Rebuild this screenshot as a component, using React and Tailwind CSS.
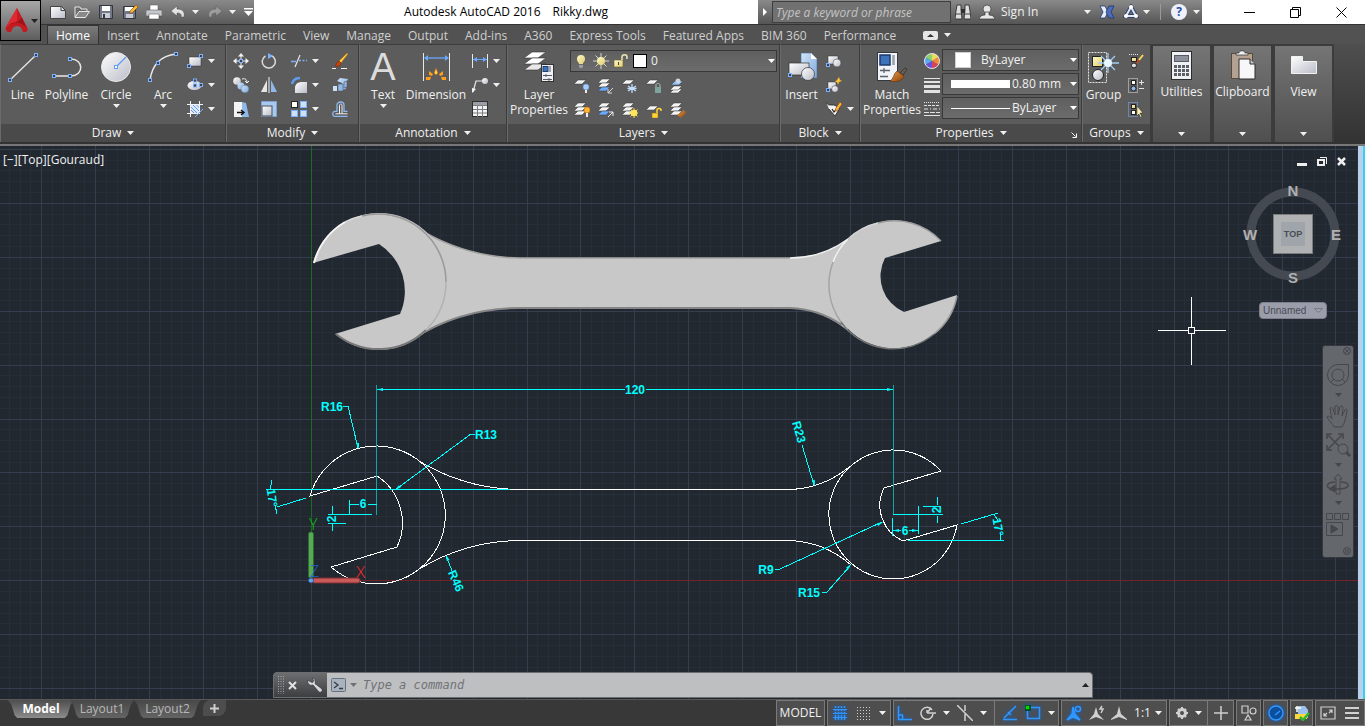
import React, { useState } from "react";

const tabs = [
  "Home",
  "Insert",
  "Annotate",
  "Parametric",
  "View",
  "Manage",
  "Output",
  "Add-ins",
  "A360",
  "Express Tools",
  "Featured Apps",
  "BIM 360",
  "Performance",
];

// ---------- small helpers ----------

const Ico = ({ size = 16, children }) => (
  <svg width={size} height={size} viewBox={`0 0 ${size} ${size}`} fill="none" className="shrink-0">
    {children}
  </svg>
);

const Tri = ({ className = "" }) => (
  <svg width="7" height="4" viewBox="0 0 7 4" className={`shrink-0 ${className}`}>
    <path d="M0 0h7L3.500 4z" fill="currentColor" />
  </svg>
);

const Grip = ({ x, y }) => (
  <rect x={x - 1.5} y={y - 1.5} width="3" height="3" fill="#3b3f48" stroke="#7db0ff" />
);

const Sheet = ({ x = 0, y = 0, fill = "#f4f4f4" }) => (
  <path d={`M${x + 4} ${y}h8l-4 4h-8z`} fill={fill} stroke="#3a3a3a" strokeWidth=".5" />
);

const Defs = () => (
  <svg width="0" height="0" className="absolute">
    <defs>
      <linearGradient id="metal" x1="0" y1="0" x2="1" y2="1">
        <stop offset="0" stopColor="#ffffff" />
        <stop offset="1" stopColor="#b9bcc8" />
      </linearGradient>
      <linearGradient id="blue" x1="0" y1="0" x2="1" y2="1">
        <stop offset="0" stopColor="#d3e6fb" />
        <stop offset="1" stopColor="#7ea9dc" />
      </linearGradient>
      <linearGradient id="gold" x1="0" y1="0" x2="1" y2="1">
        <stop offset="0" stopColor="#fffbc9" />
        <stop offset="1" stopColor="#e0cc6d" />
      </linearGradient>
      <linearGradient id="brown" x1="0" y1="0" x2="1" y2="1">
        <stop offset="0" stopColor="#e89a4c" />
        <stop offset="1" stopColor="#8a4207" />
      </linearGradient>
    </defs>
  </svg>
);

// ---------- ribbon buttons ----------

const BigButton = ({ icon, label, label2, arrow, width }) => (
  <button className={`flex flex-col items-center pt-1.5 text-[12px] leading-[15px] text-[#f0f0f0] ${width}`}>
    {icon}
    <span className="mt-1 whitespace-nowrap">{label}</span>
    {label2 && <span className="whitespace-nowrap">{label2}</span>}
    {arrow && <Tri className="mt-0.5" />}
  </button>
);

const SmallButton = ({ icon, arrow, name }) => (
  <button aria-label={name} className="flex h-6 items-center gap-[5px] text-[#f0f0f0]">
    {icon}
    {arrow && <Tri />}
  </button>
);

const Panel = ({ title, width, children, launcher }) => (
  <section className={`flex shrink-0 flex-col border-x border-t border-[#3c3c3c] border-l-[#6a6a6a] bg-[#5c5c5c] ${width}`}>
    <div className="flex flex-1">{children}</div>
    <button className="relative flex h-[18px] items-center justify-center gap-1.5 bg-[#4a4a4a] text-[12px] text-[#f0f0f0]">
      {title}
      <Tri />
      {launcher && (
        <svg width="6" height="6" viewBox="0 0 6 6" className="absolute right-1 bottom-1" fill="none" stroke="#fff">
          <path d="M.5.5l4 4M5.500 1.500v4h-4" />
        </svg>
      )}
    </button>
  </section>
);

const CollapsedPanel = ({ title, icon }) => (
  <button className="flex w-[61px] shrink-0 flex-col items-center border-2 border-b-0 border-[#3c3c3c] bg-gradient-to-b from-[#757575] to-[#4f4f4f] pt-1 text-[12px] leading-[15px] text-[#f0f0f0]">
    {icon}
    <span className="mt-0.5 whitespace-nowrap">{title}</span>
    <Tri className="mt-auto mb-1.5" />
  </button>
);

const PropertySelect = ({ name, options, swatch }) => (
  <label className="flex h-[22px] items-center border border-[#383838] bg-gradient-to-b from-[#5f5f5f] to-[#6c6c6c] pl-2">
    {swatch}
    <select aria-label={name} className="w-full min-w-0 flex-1 appearance-none bg-transparent text-[12px] leading-[18px] text-[#f0f0f0] outline-none">
      {options.map((o) => (
        <option key={o}>{o}</option>
      ))}
    </select>
    <Tri className="mr-px text-white" />
  </label>
);

// ---------- icons: draw ----------

const LineIcon = () => (
  <Ico size={32}>
    <path d="M3 29L29 4" stroke="#e8e8e8" strokeWidth="1.300" />
    <Grip x={3} y={29} />
    <Grip x={29} y={4} />
  </Ico>
);

const PolylineIcon = () => (
  <Ico size={32}>
    <path d="M3 25h17c14-1 12-17 0-17" stroke="#e8e8e8" strokeWidth="1.500" />
    <Grip x={3} y={25} />
    <Grip x={19} y={25} />
    <Grip x={19} y={8} />
  </Ico>
);

const CircleIcon = () => (
  <Ico size={32}>
    <circle cx="16" cy="16" r="14.500" fill="url(#metal)" stroke="#e9e9e9" />
    <path d="M16 16L26 6" stroke="#5f9cf0" strokeWidth="1.300" />
    <rect x="14.500" y="14.500" width="3" height="3" fill="#fff" stroke="#5f9cf0" />
  </Ico>
);

const ArcIcon = () => (
  <Ico size={32}>
    <path d="M3 29C5 15 12 5 29 3" stroke="#e8e8e8" strokeWidth="1.500" />
    <Grip x={3} y={29} />
    <Grip x={11} y={12} />
    <Grip x={29} y={3} />
  </Ico>
);

const RectIcon = () => (
  <Ico>
    <rect x="2" y="4" width="12" height="9" fill="url(#metal)" stroke="#333" strokeWidth=".5" />
    <Grip x={14} y={3} />
    <Grip x={2} y={13} />
  </Ico>
);

const EllipseIcon = () => (
  <Ico>
    <ellipse cx="7.500" cy="8.500" rx="7" ry="4.500" fill="url(#metal)" />
    <Grip x={8} y={8.5} />
    <Grip x={14} y={8} />
    <Grip x={8} y={3.5} />
  </Ico>
);

const HatchIcon = () => (
  <Ico>
    <rect x="3" y="3" width="10" height="10" fill="#dfe9fa" />
    <path d="M4 6l6 6M4 9l4 4M6 4l7 7M9 3.500l4 4" stroke="#5f9cf0" />
    <path d="M3.500 0v16M12.500 0v12M0 3.500h16M0 12.500h12" stroke="#f2f2f2" />
    <path d="M8 16l8-8" stroke="#7db0ff" />
  </Ico>
);

// ---------- icons: modify ----------

const MoveIcon = () => (
  <Ico>
    <path d="M8 0l3 3.500H5zM8 16l-3-3.500h6zM0 8l3.500-3v6zM16 8l-3.500 3V5zM7.500 2h1v4h-1zM7.500 10h1v4h-1zM2 7.500h4v1H2zM10 7.500h4v1h-4z" fill="#f2f2f2" />
    <Grip x={8} y={8} />
  </Ico>
);

const RotateIcon = () => (
  <Ico>
    <path d="M10 2.500A6.500 6.500 0 1 1 4.500 3" stroke="#dcdcdc" strokeWidth="1.500" />
    <path d="M7 0l5 3-5 3z" fill="#7db0ff" />
  </Ico>
);

const TrimIcon = () => (
  <Ico>
    <path d="M0 8.500h5" stroke="#7db0ff" strokeWidth="1.500" />
    <path d="M4 14L9 2" stroke="#e8e8e8" strokeWidth="1.200" />
    <path d="M8 7.500h8" stroke="#7db0ff" strokeWidth="1.500" strokeDasharray="2 1.500" />
  </Ico>
);

const EraseIcon = () => (
  <Ico>
    <path d="M15 0l1 1-7 9-2-2z" fill="#ffc94a" stroke="#a05a00" strokeWidth=".5" />
    <path d="M7 8l2 2c0 3-3 4-6 3 2-1 1-4 4-5z" fill="#c8440c" stroke="#6e1e00" strokeWidth=".5" />
    <path d="M0 15.500h4M9 15.500h6" stroke="#f2f2f2" />
  </Ico>
);

const CopyIcon = () => (
  <Ico>
    <circle cx="4" cy="4" r="3.800" fill="url(#metal)" />
    <circle cx="8" cy="9" r="3.500" fill="url(#blue)" />
    <circle cx="12" cy="12" r="3.800" fill="url(#blue)" stroke="#4f6a94" strokeWidth=".4" />
    <path d="M9 2c4-1 5 1 5 4M12 4l2 2 2-2" stroke="#f2f2f2" />
  </Ico>
);

const MirrorIcon = () => (
  <Ico>
    <path d="M0 15L6 3v12z" fill="#e6e6e6" />
    <path d="M10 15V3l6 12z" fill="#8fb9ea" />
    <path d="M8 0v16" stroke="#f2f2f2" />
  </Ico>
);

const FilletIcon = () => (
  <Ico>
    <path d="M4 16V11c0-4 3-6 7-6h5v11z" fill="url(#metal)" />
    <path d="M1 7C2 3 5 1 9 1" stroke="#5f9cf0" strokeWidth="2.500" />
  </Ico>
);

const ExplodeIcon = () => (
  <Ico>
    <path d="M5 4l3-3 8 1-2 4v6l-4 1V6z" fill="url(#blue)" />
    <path d="M1 9h4v5H1z" fill="#cfe1f7" />
    <path d="M6 7h5v7H6zM12 5l3-1v6l-3 1z" fill="#8fb9ea" stroke="#55585c" strokeWidth=".6" />
  </Ico>
);

const StretchIcon = () => (
  <Ico>
    <path d="M1 1h8v15H1z" fill="#f4f4f4" />
    <path d="M9 1l4 1 3 14H9z" fill="#8fb9ea" />
    <path d="M4 11.500h6M8 9l3 2.500L8 14" stroke="#111" strokeWidth="1.500" />
  </Ico>
);

const ScaleIcon = () => (
  <Ico>
    <path d="M.5.5h15v15H.5z" fill="#a9c8ef" stroke="#7ea2d2" />
    <rect x="1" y="5" width="10" height="10" fill="url(#metal)" stroke="#4d5057" />
  </Ico>
);

const ArrayIcon = () => (
  <Ico>
    <rect x=".5" y=".5" width="6" height="6" fill="#fff" stroke="#222" />
    <rect x="9.500" y=".5" width="6" height="6" fill="#cfe1f7" stroke="#7db0ff" />
    <rect x=".5" y="9.500" width="6" height="6" fill="#cfe1f7" stroke="#7db0ff" />
    <rect x="9.500" y="9.500" width="6" height="6" fill="#cfe1f7" stroke="#7db0ff" />
  </Ico>
);

const OffsetIcon = () => (
  <Ico>
    <path d="M15.500 15.300H3c-3 0-3-5 0-5h2V4c0-4 7-4 7 0v6.300h3.500" stroke="#8db8f2" strokeWidth="1.300" />
    <path d="M15.500 12.800H7.500V4.500c0-2 2.500-2 2.500 0v8M7.500 12.800H3.500" stroke="#f2f2f2" />
  </Ico>
);

// ---------- icons: annotation ----------

const DimensionIcon = () => (
  <Ico size={32}>
    <path d="M3.500 2v28M29.500 2v28" stroke="#e8e8e8" />
    <path d="M5 7h23" stroke="#6aa7ff" strokeWidth="1.300" />
    <path d="M4 7l4-3v6zM29 7l-4-3v6z" fill="#6aa7ff" />
    <path d="M16 17l2 5-2 2-2-2zM9 20l4 3-1 2-3-1zM23 20l-4 3 1 2 3-1zM6 26l5 0-1 3-4 0zM26 26l-5 0 1 3 4 0z" fill="#ff9c1a" />
    <path d="M16 19l1 3-1 1-1-1z" fill="#ffe36b" />
  </Ico>
);

const LinearIcon = () => (
  <Ico>
    <path d="M.5 1v14M15.500 1v14" stroke="#e8e8e8" />
    <path d="M1 6.500h14" stroke="#6aa7ff" />
    <path d="M1 6.500L5 4v5zM15 6.500L11 4v5z" fill="#6aa7ff" />
  </Ico>
);

const LeaderIcon = () => (
  <Ico>
    <path d="M1 15L4 4h6" stroke="#e8e8e8" strokeWidth="1.200" />
    <path d="M0 16l0-5 4 1z" fill="#f2f2f2" />
    <circle cx="13" cy="4" r="3" fill="url(#metal)" />
  </Ico>
);

const TableIcon = () => (
  <Ico>
    <rect x=".5" y=".5" width="15" height="15" fill="#f2f2f2" stroke="#2f2f2f" />
    <path d="M1 1h14v3H1z" fill="#9b9ea6" />
    <path d="M1 4.500h14M1 8.500h14M1 12h14M5.500 4v12M10.500 4v12" stroke="#7a7d84" />
  </Ico>
);

// ---------- icons: layers ----------

const LayerPropsIcon = () => (
  <Ico size={32}>
    <path d="M9 1h14l-8 6H1z" fill="#fff" stroke="#333" strokeWidth=".6" />
    <path d="M9 7h14l-8 6H1z" fill="#fff" stroke="#333" strokeWidth=".6" />
    <path d="M9 13h14l-8 6H1z" fill="#e8e8e8" stroke="#333" strokeWidth=".6" />
    <rect x="18.500" y="13.500" width="12" height="17" fill="#eef0f6" stroke="#333" />
    <rect x="20" y="15.500" width="5" height="5" fill="#3e73bb" stroke="#1e3f72" />
    <path d="M27 15v6M20 24.500h9M20 28.500h9M23 23v3M26 27v3" stroke="#555b66" />
  </Ico>
);

const Stack = ({ accent = "#f4f4f4" }) => (
  <>
    <Sheet y={1} />
    <Sheet y={5} />
    <Sheet y={9} fill={accent} />
  </>
);

const layerTools = [
  { name: "Layer Off", icon: <Ico><Sheet y={2} /><circle cx="12" cy="9" r="3" fill="#a8cdfa" stroke="#5f8dd0" strokeWidth=".5" /><path d="M12 12v3" stroke="#eee" strokeWidth="2" /></Ico> },
  { name: "Layer Isolate", icon: <Ico><Stack accent="#6aa7ff" /><path d="M15 10l-5 5M10 11v4h4" stroke="#d8d8d8" /></Ico> },
  { name: "Layer Freeze", icon: <Ico><Sheet y={2} /><path d="M10 6v9M6 8l8 5M14 8l-8 5M5.500 10.500h9" stroke="#c3ddfc" strokeWidth="1.300" /></Ico> },
  { name: "Layer Lock", icon: <Ico><Sheet y={2} /><rect x="9" y="9" width="6" height="6" fill="#7fa39d" /><path d="M10 9V7c0-2 4-2 4 0v2" stroke="#a9bdb9" /></Ico> },
  { name: "Make Current", icon: <Ico><Sheet y={11} /><Sheet y={8} /><Sheet x={1} y={3} fill="#8fc0f5" /><circle cx="8" cy="3" r="2.500" fill="#cbd6e2" /></Ico> },
  { name: "Turn All On", icon: <Ico><Stack /><circle cx="13" cy="8" r="3" fill="#ffb938" stroke="#e06d00" strokeWidth=".7" /><path d="M13 11v4" stroke="#eee" strokeWidth="2" /></Ico> },
  { name: "Unisolate", icon: <Ico><Stack accent="#6aa7ff" /><path d="M10 15l5-5M11 10h4v4" stroke="#f2f2f2" /></Ico> },
  { name: "Thaw All", icon: <Ico><Stack /><path d="M12 6v10M7 11h10M8.500 7.500l7 7M15.500 7.500l-7 7" stroke="#ffd93b" /><circle cx="12" cy="11" r="3.300" fill="#ffe65c" /></Ico> },
  { name: "Layer Unlock", icon: <Ico><Sheet y={4} /><rect x="6" y="11" width="6" height="5" fill="#ffd23a" stroke="#8b6500" strokeWidth=".5" /><path d="M11 11V8c0-2 4-2 4 0v1" stroke="#ffd23a" strokeWidth="1.500" /></Ico> },
  { name: "Match Layer", icon: <Ico><Stack /><path d="M14 8l2 3-5 5-4-3z" fill="url(#brown)" /></Ico> },
];

// ---------- icons: block, properties, groups ----------

const InsertIcon = () => (
  <Ico size={32}>
    <path d="M15 2h10l6 6v19H15z" fill="url(#blue)" stroke="#4b6d98" strokeWidth=".6" />
    <path d="M25 2v6h6z" fill="#fff" />
    <rect x="3" y="12" width="20" height="12" fill="url(#metal)" stroke="#333" strokeWidth=".7" />
    <circle cx="22" cy="23" r="6.500" fill="url(#metal)" stroke="#333" strokeWidth=".7" />
    <Grip x={4} y={24} />
  </Ico>
);

const BlockShape = () => (
  <>
    <rect x="2" y="3" width="10" height="8" fill="url(#metal)" stroke="#333" strokeWidth=".5" />
    <circle cx="11" cy="10" r="4" fill="url(#metal)" stroke="#333" strokeWidth=".5" />
    <Grip x={2} y={12} />
  </>
);

const EditBlockIcon = () => (
  <Ico>
    <rect x="2" y="5" width="8" height="7" fill="url(#metal)" stroke="#333" strokeWidth=".5" />
    <circle cx="9" cy="12" r="3.300" fill="url(#metal)" stroke="#333" strokeWidth=".5" />
    <Grip x={2} y={13} />
    <path d="M13 0l1 3 2 1-3 1-1 3-1-3-2 0 2-2z" fill="#ffc12e" />
  </Ico>
);

const AttributeIcon = () => (
  <Ico>
    <path d="M0 1c1 2 2 3 4 3h4l6 3-5 8-6-7" fill="#f2f2f2" stroke="#222" strokeWidth=".8" />
    <path d="M6 8l2 3 4-5" stroke="#222" strokeWidth="1.200" />
    <path d="M14 1l2 2-5 7-2 0 1-3z" fill="#ffb938" stroke="#9b4200" strokeWidth=".6" />
  </Ico>
);

const MatchIcon = () => (
  <Ico size={32}>
    <rect x="1.500" y="1.500" width="20" height="28" fill="#f1f3f8" stroke="#33383f" />
    <rect x="4" y="4" width="10" height="10" fill="#3e73bb" stroke="#1c3b6b" strokeWidth="1.500" />
    <path d="M17.500 4v10" stroke="#9aa0aa" strokeWidth="2.500" />
    <path d="M4 19.500h10M8 17v5M4 25.500h8" stroke="#5b616b" strokeWidth="1.300" />
    <path d="M24 22l5-5 2 1-4 6z" fill="#6b5b50" stroke="#222" strokeWidth=".6" />
    <path d="M21 20l7 5c-1 4-7 7-14 5 4-2 3-7 7-10z" fill="url(#brown)" stroke="#5f2f08" strokeWidth=".6" />
  </Ico>
);

const ColorWheel = () => (
  <Ico>
    <path d="M8 8V.5A7.500 7.500 0 0 1 14.500 4.200z" fill="#ecd95e" />
    <path d="M8 8l6.500-3.800a7.500 7.500 0 0 1 0 7.500z" fill="#f08a3c" />
    <path d="M8 8l6.500 3.800A7.500 7.500 0 0 1 8 15.500z" fill="#d4455c" />
    <path d="M8 8v7.500a7.500 7.500 0 0 1-6.500-3.700z" fill="#6a4fd8" />
    <path d="M8 8l-6.500 3.800a7.500 7.500 0 0 1 0-7.600z" fill="#59a8f0" />
    <path d="M8 8L1.500 4.200A7.500 7.500 0 0 1 8 .5z" fill="#8cd06a" />
    <circle cx="8" cy="8" r="7.500" stroke="#e2e2e2" />
  </Ico>
);

const WeightIcon = () => (
  <Ico>
    <path d="M0 1.500h16" stroke="#e2e2e2" />
    <path d="M0 5h16" stroke="#e2e2e2" strokeWidth="2" />
    <path d="M0 9.500h16" stroke="#e2e2e2" strokeWidth="3" />
    <path d="M0 14.500h16" stroke="#e2e2e2" strokeWidth="3" />
  </Ico>
);

const LinetypeIcon = () => (
  <Ico>
    <path d="M0 1.500h16" stroke="#e2e2e2" strokeDasharray="1 1" />
    <path d="M0 4.500h16" stroke="#e2e2e2" strokeDasharray="3 1" />
    <path d="M0 8h16" stroke="#e2e2e2" strokeDasharray="4 2 1 2" />
    <path d="M0 11.500h16" stroke="#e2e2e2" strokeDasharray="5 1" />
    <path d="M0 14.500h16" stroke="#e2e2e2" />
  </Ico>
);

const GroupIcon = () => (
  <Ico size={32}>
    <rect x=".5" y="1.500" width="18" height="30" stroke="#e2e2e2" strokeDasharray="2 1" />
    <rect x="4.500" y="5.500" width="10" height="10" fill="url(#gold)" stroke="#222" />
    <circle cx="10" cy="24" r="5.500" fill="url(#metal)" stroke="#222" />
    <path d="M20 2v20M10 12h21M13 5l14 14M27 5L13 19" stroke="#9fd0f8" strokeWidth="1.300" />
    <circle cx="20" cy="12" r="4" fill="#e7f6ff" />
  </Ico>
);

const GroupEditIcon = () => (
  <Ico>
    <path d="M1 1.500h9" stroke="#e2e2e2" strokeDasharray="1 1" />
    <rect x="3.500" y="4.500" width="5" height="4" fill="url(#gold)" stroke="#222" />
    <circle cx="6" cy="12.500" r="2.500" fill="url(#metal)" stroke="#222" />
    <path d="M15 2l-4 5" stroke="#ffd35a" strokeWidth="2" />
    <path d="M11 7l-2 3" stroke="#d0421c" strokeWidth="2" />
  </Ico>
);

const GroupAddIcon = () => (
  <Ico>
    <rect x=".5" y="1.500" width="9" height="14" stroke="#e2e2e2" strokeDasharray="1 1" />
    <rect x="3.500" y="3.500" width="4" height="4" fill="#fff" stroke="#222" />
    <circle cx="5.500" cy="11.500" r="2.500" fill="#8fb9ea" stroke="#222" />
    <path d="M11 5.500h5M13.500 3v5M11 11.500h5" stroke="#e2e2e2" />
  </Ico>
);

const GroupSelectIcon = () => (
  <Ico>
    <rect x=".5" y="1.500" width="9" height="14" stroke="#7db0ff" strokeDasharray="1 1" />
    <rect x="3.500" y="3.500" width="4" height="4" fill="url(#gold)" stroke="#222" />
    <rect x="3.500" y="9.500" width="4" height="4" fill="#fff" stroke="#222" />
    <path d="M9 5l6 7h-3l2 4-2 0-1-3-2 2z" fill="#fff3b0" stroke="#222" strokeWidth=".5" />
  </Ico>
);

const UtilitiesIcon = () => (
  <Ico size={32}>
    <rect x="5.500" y="1.500" width="20" height="28" fill="#f0f1f4" stroke="#2c2c2c" />
    <rect x="8.500" y="5.500" width="14" height="6" fill="#8b909a" stroke="#555a64" />
    {[15, 19, 23].map((y) => (
      <path key={y} d={`M8 ${y + 1.5}h15`} stroke="#5b5f68" strokeWidth="3" strokeDasharray="3 1" />
    ))}
  </Ico>
);

const ClipboardIcon = () => (
  <Ico size={32}>
    <rect x="4.500" y="3.500" width="21" height="25" fill="#b3a291" stroke="#5c4a38" />
    <path d="M9 5h12V3h-3c0-3-6-3-6 0H9z" fill="#f2f2f2" stroke="#2c2c2c" strokeWidth=".7" />
    <path d="M12 9h11l5 5v15H12z" fill="#f7f7f9" stroke="#2c2c2c" />
    <path d="M23 9v5h5" fill="#c9ccd4" stroke="#2c2c2c" />
  </Ico>
);

const ViewIcon = () => (
  <Ico size={32}>
    <path d="M3.500 6.500h11v5h14v12h-25z" fill="url(#metal)" stroke="#f2f2f2" />
  </Ico>
);

// ---------- title bar ----------

const TitleBar = () => (
  <header className="flex h-6 shrink-0 bg-white">
    <div className="flex w-[254px] shrink-0 items-center gap-2 bg-gradient-to-b from-[#8a8a8a] to-[#5a5a5a] pl-[50px] text-[#f0f0f0]">
      <button aria-label="New">
        <Ico><path d="M.5 2.500h11l4 4v8H.5z" fill="url(#metal)" stroke="#444" /><path d="M11 2.500v4h4.500" stroke="#444" /></Ico>
      </button>
      <button aria-label="Open">
        <Ico><path d="M1 13V3h5l1 2h6v2" fill="#6b6b6b" stroke="#e6e6e6" /><path d="M1 13.500L5 7.500h10.500l-4 6z" fill="#8a8a8a" stroke="#e6e6e6" /></Ico>
      </button>
      <button aria-label="Save">
        <Ico><path d="M1.500 1.500h13v13h-13z" fill="#727888" stroke="#33373f" /><path d="M4 2h8v5H4z" fill="#fff" /><path d="M4 9h8v5H4z" fill="#c9ccd4" /><path d="M5 10h2v4H5z" fill="#33373f" /></Ico>
      </button>
      <button aria-label="Save As">
        <Ico><path d="M1.500 2.500h12v12h-12z" fill="#727888" stroke="#33373f" /><path d="M3 3h8v4H3z" fill="#fff" /><path d="M4 10h7v4H4z" fill="#c9ccd4" /><path d="M14 1l2 2-6 6-2 0 0-2z" fill="#ffb938" stroke="#7a4300" strokeWidth=".6" /></Ico>
      </button>
      <button aria-label="Print">
        <Ico><path d="M4 1h8v6H4z" fill="#fff" stroke="#555" strokeWidth=".5" /><path d="M0 6h16v6H0z" fill="#c5c8cf" stroke="#444" strokeWidth=".5" /><path d="M3 10h10v5H3z" fill="#fff" stroke="#444" strokeWidth=".5" /></Ico>
      </button>
      <button aria-label="Undo" className="flex items-center gap-1.5">
        <Ico><path d="M1 7l6-5v3c6 0 8 3 7 8H11c1-3-1-4-4-4v3z" fill="#e2e2e2" stroke="#4c4c4c" strokeWidth=".5" /></Ico>
        <Tri />
      </button>
      <button aria-label="Redo" className="flex items-center gap-1.5">
        <Ico><path d="M15 7L9 2v3c-6 0-8 3-7 8h3c-1-3 1-4 4-4v3z" fill="#9d9d9d" stroke="#5c5c5c" strokeWidth=".5" /></Ico>
        <Tri />
      </button>
      <button aria-label="Customize">
        <svg width="9" height="8" viewBox="0 0 9 8"><path d="M0 0h9v1.500H0zM0 3h9L4.500 8z" fill="#fff" /></svg>
      </button>
    </div>
    <h1 className="flex flex-1 items-center justify-center gap-3 text-[12px] text-black">
      <span>Autodesk AutoCAD 2016</span>
      <span>Rikky.dwg</span>
    </h1>
    <div className="flex w-[444px] shrink-0 items-center bg-gradient-to-b from-[#8a8a8a] to-[#555] text-[12px] text-[#f0f0f0]">
      <svg width="14" height="8" viewBox="0 0 14 8"><path d="M5 0l4 4-4 4z" fill="#fff" /></svg>
      <input
        aria-label="Search"
        placeholder="Type a keyword or phrase"
        className="h-[22px] w-[179px] border border-[#3e3e3e] bg-[#717171] px-[3px] text-[12px] italic outline-none placeholder:text-[#c4c4c4]"
      />
      <button aria-label="Find" className="ml-1">
        <Ico><path d="M2 1h4v5l1 9H0l1-8zM14 1h-4v5L9 15h7l-1-8z" fill="#dedede" stroke="#2f2f2f" strokeWidth=".9" /><path d="M6 5h4v4H6z" fill="#2f2f2f" /><path d="M1 10h5M10 10h5" stroke="#444" /></Ico>
      </button>
      <button className="ml-2 flex items-center gap-1.5">
        <Ico><circle cx="8" cy="5" r="4" fill="#e6e6e6" stroke="#333" strokeWidth=".7" /><path d="M6 8h4v3c3 0 5 1 6 4H0c1-3 3-4 6-4z" fill="#e6e6e6" stroke="#333" strokeWidth=".7" /></Ico>
        Sign In
      </button>
      <Tri className="ml-auto" />
      <button aria-label="Exchange" className="ml-2">
        <Ico><path d="M1 2h5l3 6-3 6H1l3-6z" fill="#e8eefc" stroke="#22356b" strokeWidth=".8" /><path d="M15 2h-5L7 8l3 6h5l-3-6z" fill="#4c6fbd" stroke="#22356b" strokeWidth=".8" /></Ico>
      </button>
      <button aria-label="A360" className="ml-2 flex items-center gap-1">
        <Ico><path d="M8 3L3 12h10z" stroke="#34436e" strokeWidth="4" /><path d="M8 3L3 12h10z" stroke="#dfe6f5" strokeWidth="2" /><circle cx="8" cy="3" r="2" fill="#fff" /><circle cx="3" cy="12" r="2" fill="#fff" /><circle cx="13" cy="12" r="2" fill="#fff" /></Ico>
        <Tri />
      </button>
      <div className="ml-2.5 h-4 w-px bg-[#9a9a9a]" />
      <button aria-label="Help" className="mr-0.5 ml-2.5 flex items-center gap-1.5">
        <span className="flex size-4 items-center justify-center rounded-full bg-[#eef1fa] text-[12px] leading-4 font-bold text-[#2a4fa8]">?</span>
        <Tri />
      </button>
    </div>
    <div className="flex w-[163px] shrink-0 items-center justify-between pr-[18px] pl-[42px] text-black">
      <button aria-label="Minimize"><svg width="11" height="11"><path d="M0 5.500h11" stroke="#000" /></svg></button>
      <button aria-label="Restore"><svg width="11" height="11" fill="none" stroke="#000"><path d="M.5 2.500h8v8h-8zM2.500 2.500v-2h8v8h-2" /></svg></button>
      <button aria-label="Close"><svg width="11" height="11" stroke="#000"><path d="M.5.5l10 10M10.500.5l-10 10" /></svg></button>
    </div>
  </header>
);

// ---------- ribbon ----------

const Ribbon = () => (
  <div className="flex h-[98px] shrink-0 bg-gradient-to-b from-[#4f4f4f] to-[#333]">
    <Panel title="Draw" width="w-[226px]">
      <BigButton width="w-[43px]" icon={<LineIcon />} label="Line" />
      <BigButton width="w-[45px]" icon={<PolylineIcon />} label="Polyline" />
      <BigButton width="w-[54px]" icon={<CircleIcon />} label="Circle" arrow />
      <BigButton width="w-[40px]" icon={<ArcIcon />} label="Arc" arrow />
      <div className="ml-1 pt-1">
        <SmallButton name="Rectangle" icon={<RectIcon />} arrow />
        <SmallButton name="Ellipse" icon={<EllipseIcon />} arrow />
        <SmallButton name="Hatch" icon={<HatchIcon />} arrow />
      </div>
    </Panel>

    <Panel title="Modify" width="w-[133px]">
      <div className="grid grid-cols-[28px_30px_41px_24px] content-start pt-1 pl-1.5">
        <SmallButton name="Move" icon={<MoveIcon />} />
        <SmallButton name="Rotate" icon={<RotateIcon />} />
        <SmallButton name="Trim" icon={<TrimIcon />} arrow />
        <SmallButton name="Erase" icon={<EraseIcon />} />
        <SmallButton name="Copy" icon={<CopyIcon />} />
        <SmallButton name="Mirror" icon={<MirrorIcon />} />
        <SmallButton name="Fillet" icon={<FilletIcon />} arrow />
        <SmallButton name="Explode" icon={<ExplodeIcon />} />
        <SmallButton name="Stretch" icon={<StretchIcon />} />
        <SmallButton name="Scale" icon={<ScaleIcon />} />
        <SmallButton name="Array" icon={<ArrayIcon />} arrow />
        <SmallButton name="Offset" icon={<OffsetIcon />} />
      </div>
    </Panel>

    <Panel title="Annotation" width="w-[148px]">
      <BigButton
        width="w-[46px]"
        icon={<span className="flex h-8 items-center font-['Liberation_Sans'] text-[38px] text-[#dcdcdc]">A</span>}
        label="Text"
        arrow
      />
      <BigButton width="w-[60px]" icon={<DimensionIcon />} label="Dimension" />
      <div className="ml-1.5 pt-1">
        <SmallButton name="Linear" icon={<LinearIcon />} arrow />
        <SmallButton name="Leader" icon={<LeaderIcon />} arrow />
        <SmallButton name="Table" icon={<TableIcon />} />
      </div>
    </Panel>

    <Panel title="Layers" width="w-[273px]">
      <BigButton width="w-[62px]" icon={<LayerPropsIcon />} label="Layer" label2="Properties" />
      <div className="flex-1 pt-[5px] pr-0.5">
        <PropertySelect
          name="Layer"
          options={["0", "Defpoints"]}
          swatch={
            <span className="-ml-1.5 flex items-center gap-1">
              <Ico>
                <path d="M4 6a4 4 0 1 1 8 0c0 3-2 3-2 5H6c0-2-2-2-2-5z" fill="url(#gold)" />
                <path d="M6 12h4v2l-2 1.500L6 14z" fill="#9aa0aa" />
              </Ico>
              <Ico>
                <path d="M8 0v16M0 8h16M2.500 2.500l11 11M13.500 2.500l-11 11" stroke="#d8d8c8" />
                <circle cx="8" cy="8" r="4" fill="url(#gold)" />
              </Ico>
              <Ico>
                <rect x="1" y="7" width="9" height="7" fill="url(#gold)" stroke="#6b5f2f" strokeWidth=".6" />
                <path d="M9 7V4c0-3 5-3 5 0v2" stroke="#efe6ae" strokeWidth="1.500" />
                <path d="M5.500 9v3" stroke="#444" />
              </Ico>
              <span className="mr-1 size-[14px] border border-black bg-white" />
            </span>
          }
        />
        <div className="mt-0.5 grid grid-cols-[repeat(5,24px)] pl-1">
          {layerTools.map((t) => (
            <SmallButton key={t.name} name={t.name} icon={t.icon} />
          ))}
        </div>
      </div>
    </Panel>

    <Panel title="Block" width="w-[80px]">
      <BigButton width="w-[41px]" icon={<InsertIcon />} label="Insert" />
      <div className="ml-1 pt-1">
        <SmallButton name="Create" icon={<Ico><BlockShape /></Ico>} />
        <SmallButton name="Edit" icon={<EditBlockIcon />} />
        <SmallButton name="Attributes" icon={<AttributeIcon />} arrow />
      </div>
    </Panel>

    <Panel title="Properties" width="w-[222px]" launcher>
      <BigButton width="w-[62px]" icon={<MatchIcon />} label="Match" label2="Properties" />
      <div className="ml-px pt-1">
        <SmallButton name="Color" icon={<ColorWheel />} />
        <SmallButton name="Lineweight" icon={<WeightIcon />} />
        <SmallButton name="Linetype" icon={<LinetypeIcon />} />
      </div>
      <div className="ml-0.5 flex flex-1 flex-col gap-0.5 pt-1 pr-0.5">
        <PropertySelect
          name="Object color"
          options={["ByLayer", "ByBlock"]}
          swatch={<span className="mr-2.5 ml-1 size-4 shrink-0 border border-[#cfcfcf] bg-white" />}
        />
        <PropertySelect
          name="Object lineweight"
          options={["0.80 mm", "0.25 mm"]}
          swatch={<span className="mr-0.5 h-2 w-[59px] shrink-0 bg-white" />}
        />
        <PropertySelect
          name="Object linetype"
          options={["ByLayer", "Continuous"]}
          swatch={<span className="mr-0.5 h-px w-[59px] shrink-0 bg-white" />}
        />
      </div>
    </Panel>

    <Panel title="Groups" width="w-[69px]">
      <BigButton width="w-[41px]" icon={<GroupIcon />} label="Group" />
      <div className="ml-1 pt-1">
        <SmallButton name="Ungroup" icon={<GroupEditIcon />} />
        <SmallButton name="Group edit" icon={<GroupAddIcon />} />
        <SmallButton name="Group selection" icon={<GroupSelectIcon />} />
      </div>
    </Panel>

    <CollapsedPanel title="Utilities" icon={<UtilitiesIcon />} />
    <CollapsedPanel title="Clipboard" icon={<ClipboardIcon />} />
    <CollapsedPanel title="View" icon={<ViewIcon />} />
  </div>
);

// ---------- drawing ----------

const Arrow = ({ x, y, angle }) => (
  <path d="M0 0l-6-1.500v3z" fill="#00ffff" transform={`translate(${x} ${y}) rotate(${angle})`} />
);

const DimText = ({ x, y, angle = 0, children }) => (
  <text
    transform={`translate(${x} ${y}) rotate(${angle})`}
    y="4"
    textAnchor="middle"
    fill="#00ffff"
    className="font-['Liberation_Sans'] text-[12px] font-bold"
  >
    {children}
  </text>
);

const SolidWrench = () => (
  <g strokeWidth="1.500">
    <path
      d="M424 232A198 198 0 0 0 520 258H790A99 99 0 0 0 848 239V331A99 99 0 0 0 790 308H520A198 198 0 0 0 424 333z"
      fill="#c8c8c8"
    />
    <path d="M424 232A198 198 0 0 0 520 258H790" fill="none" stroke="#a2a2a2" />
    <path d="M790 258A99 99 0 0 0 848 239" fill="none" stroke="#f2f2f2" />
    <path d="M414 338A198 198 0 0 1 520 308H790A99 99 0 0 1 842 325" fill="none" stroke="#858585" strokeWidth="2" />
    <path
      d="M313 263A68.500 68.500 0 1 1 335 334L400 314A56 56 0 0 0 379 244z"
      fill="#c8c8c8"
    />
    <path d="M314 263A68 68 0 0 1 345 222" fill="none" stroke="#f4f4f4" strokeWidth="2" />
    <path d="M345 222A68 68 0 0 1 362 216" fill="none" stroke="#d8d8d8" />
    <path d="M362 216A68 68 0 0 1 446 282" fill="none" stroke="#9a9a9a" />
    <path d="M446 282A68 68 0 0 1 426 330" fill="none" stroke="#b2b2b2" />
    <path d="M426 330A68 68 0 0 1 336 334" fill="none" stroke="#777" strokeWidth="2" />
    <path
      d="M941 241A64 64 0 1 0 957 295L904 312A39 39 0 0 1 885 258z"
      fill="#c8c8c8"
    />
    <path d="M941 241A64 64 0 0 0 878 223" fill="none" stroke="#9a9a9a" />
    <path d="M878 223A64 64 0 0 0 848 239" fill="none" stroke="#d6d6d6" />
    <path d="M848 239A64 64 0 0 0 833 262" fill="none" stroke="#f0f0f0" />
    <path d="M833 262A64 64 0 0 0 841 322" fill="none" stroke="#a4a4a4" />
    <path d="M841 322A64 64 0 0 0 934 334" fill="none" stroke="#747474" />
    <path d="M934 334A64 64 0 0 0 957 296" fill="none" stroke="#9a9a9a" />
  </g>
);

const WrenchOutline = () => (
  <g fill="none" stroke="#fff" shapeRendering="crispEdges">
    <path d="M310 496A69 69 0 1 1 331 567L397 547A56 56 0 0 0 377 476z" />
    <path d="M419 461A198 198 0 0 0 520 489.500H788A99 99 0 0 0 848 468" />
    <path d="M421 568A198 198 0 0 1 520 540.500H788A99 99 0 0 1 851 565" />
    <path d="M941 471A64.500 64.500 0 1 0 957 525L903 541A39 39 0 0 1 884 488z" />
  </g>
);

const Dimensions = () => (
  <g>
    <g fill="none" stroke="#00ffff" shapeRendering="crispEdges">
      <path d="M377 389.500h248M646 389.500h247" />
      <path d="M376.500 385v130M893.500 385v130" stroke="#14a3aa" />
      <path d="M343 406h5l10 42M475 434h-4l-76 56M266 489.500h244" />
      <path d="M802 445l12 40M775 569h5l102-47M822 592h5l23-26" />
      <path d="M446 556l7 17M277 507l29-9" />
      <path d="M272 480l-2 10M275 505l2 9" />
      <path d="M349.500 500v15M350 504.500h9M368 504.500h9M328 514.500h44M328 523.500h18M332.500 506v8M332.500 524v7" />
      <path d="M892.500 518v18M918.500 506v28M893 530.500h8M909 530.500h9M893 514.500h50M923 506.500h18M937.500 497v8M937.500 516v7" />
      <path d="M961 524l37-11M908 540.500h96M994 514l4 7M1000 533v8" />
    </g>
    <Arrow x={377} y={389.5} angle={180} />
    <Arrow x={893} y={389.5} angle={0} />
    <Arrow x={359} y={449} angle={76} />
    <Arrow x={395} y={490} angle={143} />
    <Arrow x={815} y={486} angle={74} />
    <Arrow x={883} y={522} angle={-25} />
    <Arrow x={851} y={564} angle={-50} />
    <Arrow x={446} y={555} angle={-112} />
    <Arrow x={893} y={530.5} angle={180} />
    <Arrow x={918} y={530.5} angle={0} />
    <DimText x={635} y={390}>120</DimText>
    <DimText x={332} y={407}>R16</DimText>
    <DimText x={486} y={435}>R13</DimText>
    <DimText x={799} y={432} angle={74}>R23</DimText>
    <DimText x={766} y={570}>R9</DimText>
    <DimText x={809} y={593}>R15</DimText>
    <DimText x={456} y={581} angle={66}>R46</DimText>
    <DimText x={272} y={498} angle={82}>17°</DimText>
    <DimText x={998} y={527} angle={80}>17°</DimText>
    <DimText x={363} y={504}>6</DimText>
    <DimText x={332} y={519} angle={-90}>2</DimText>
    <DimText x={905} y={531}>6</DimText>
    <DimText x={937} y={510} angle={-90}>2</DimText>
  </g>
);

const UcsIcon = () => (
  <g className="font-['Open_Sans'] font-light">
    <text x="309" y="530" fill="#12c012" className="text-[16px]">Y</text>
    <text x="356" y="578" fill="#ff2a2a" className="text-[17px]">X</text>
    <rect x="308.500" y="532" width="5" height="46" rx="2" fill="#58a858" stroke="#2e6b2e" />
    <rect x="312" y="578" width="48" height="5" rx="2" fill="#c85a5a" stroke="#7c2c2c" />
    <text x="310" y="577" fill="#1760d8" className="text-[16px]">Z</text>
    <circle cx="311" cy="580.500" r="2.500" fill="#6fa4e8" stroke="#24508f" />
  </g>
);

// one grid line per step, snapped to whole pixels; origin is the UCS origin
const gridPath = (step) => {
  const lines = [];
  for (let i = Math.ceil(-311 / step); 311 + i * step < 2600; i++) {
    lines.push(`M${Math.floor(311.3 + i * step) + 0.5} 146v1500`);
  }
  for (let i = Math.ceil(-434 / step); 580 + i * step < 1600; i++) {
    lines.push(`M0 ${Math.floor(580.85 + i * step) + 0.5}h2600`);
  }
  return lines.join("");
};

const Drawing = () => (
  <svg className="absolute inset-0 h-full w-full">
    <g transform="translate(0 -146)">
      <path d={gridPath(10.786)} stroke="#272e3a" />
      <path d={gridPath(53.93)} stroke="#363d4e" />
      <path d="M311.500 146v434" stroke="#1f6a22" />
      <path d="M312 580.500h2000" stroke="#74222a" />
      <SolidWrench />
      <WrenchOutline />
      <Dimensions />
      <UcsIcon />
      <g fill="none" stroke="#fff">
        <path d="M1158 330.500h30M1195 330.500h31M1191.500 297v30M1191.500 334v31" />
        <rect x="1188.500" y="327.500" width="6" height="6" />
      </g>
    </g>
  </svg>
);

// ---------- canvas overlays ----------

const ViewCube = () => (
  <div className="absolute top-9 right-3.5 w-[102px]">
    <svg width="102" height="104" viewBox="0 0 102 104" className="font-['Liberation_Sans'] text-[15px] font-bold">
      <circle cx="51" cy="52" r="42" fill="none" stroke="#444952" strokeWidth="9" />
      <rect x="31.500" y="32.500" width="39" height="39" fill="#b0b1b2" stroke="#7b7d7c" />
      <rect x="39" y="40" width="24" height="24" fill="#9fa5ab" />
      <g fill="#b0b0b0" textAnchor="middle">
        <text x="51" y="14">N</text>
        <text x="51" y="101">S</text>
        <text x="8" y="58">W</text>
        <text x="94" y="58">E</text>
        <text x="51" y="55" fill="#4a4e54" className="text-[9px]">TOP</text>
      </g>
    </svg>
    <button className="mx-auto mt-4 flex h-[17px] w-[68px] items-center justify-between rounded border border-[#7d7f8c] bg-[#9b9dab] px-[3px] font-['Liberation_Sans'] text-[10px] text-[#484b55]">
      Unnamed
      <svg width="9" height="5" viewBox="0 0 9 5" fill="none" stroke="#777a88"><path d="M.5.5h8l-4 4z" /></svg>
    </button>
  </div>
);

const NavBar = () => (
  <nav className="absolute top-[199px] right-1 flex h-[213px] w-8 flex-col items-center rounded-[3px] border border-[#35393f] bg-[#64676b] text-[#44474c]">
    <button aria-label="Close bar" className="self-end pt-px pr-0.5">
      <svg width="8" height="8" fill="none" stroke="currentColor"><circle cx="4" cy="4" r="3.500" /><path d="M2 2l4 4M6 2l-4 4" /></svg>
    </button>
    <button aria-label="Steering wheel" className="mt-2">
      <svg width="24" height="24" viewBox="0 0 24 24" fill="none" stroke="currentColor">
        <path d="M12 1.500h10.500V12A10.500 10.500 0 1 1 12 1.500z" />
        <circle cx="12" cy="12" r="6" />
        <path d="M5 19l3-3M19 19l-3-3" />
      </svg>
    </button>
    <Tri className="mt-1.5" />
    <button aria-label="Pan" className="mt-2">
      <svg width="24" height="24" viewBox="0 0 24 24" fill="none" stroke="currentColor">
        <path d="M8 22c-2-4-5-6-7-10 1-2 4 0 5 2L4 4c0-2 2-2 3 0l2 6V2c0-2 3-2 3 0v8l2-8c1-2 3-1 3 1l-1 8 3-6c1-2 3 0 2 1-1 5-2 12-5 16z" />
      </svg>
    </button>
    <button aria-label="Zoom" className="mt-1">
      <svg width="25" height="24" viewBox="0 0 25 24" fill="none" stroke="currentColor">
        <path d="M2 2l14 14M16 2L2 16" strokeWidth="1.500" />
        <path d="M1 6V1h5M12 1h5v5M1 12v5h5" strokeWidth="1.500" />
        <circle cx="17" cy="16" r="5" fill="#64676b" />
        <path d="M20 19l4 4" strokeWidth="3" />
      </svg>
    </button>
    <Tri className="mt-1.5" />
    <button aria-label="Orbit" className="mt-1.5">
      <svg width="24" height="22" viewBox="0 0 24 22" fill="none" stroke="currentColor">
        <path d="M10 21V6H8l4-5 4 5h-2v15z" />
        <path d="M9 9C0 9-1 15 6 16M15 9c10 0 10 7-3 7H7" strokeWidth="1.500" />
        <path d="M9 12l-6 4 6 3z" fill="currentColor" />
      </svg>
    </button>
    <Tri className="mt-1.5" />
    <button aria-label="ShowMotion" className="mt-2">
      <svg width="24" height="24" viewBox="0 0 24 24" fill="none" stroke="currentColor">
        <path d="M.5.500h6v6h-6zM8.500.500h6v6h-6zM16.500.500h6v6h-6zM.5 9.500h16v13H.5z" />
        <path d="M5 12l7 4-7 4z" fill="currentColor" />
      </svg>
    </button>
    <button aria-label="Bar options" className="mt-auto self-end pr-0.5 pb-0.5">
      <svg width="8" height="8" fill="none" stroke="currentColor"><circle cx="4" cy="4" r="3.500" /><path d="M2 3h4M2 5h4" /></svg>
    </button>
  </nav>
);

const CommandLine = ({ value, onChange }) => (
  <div className="absolute right-[265px] bottom-px left-[273px] flex h-[26px] rounded-t-sm border border-[#6b6d70] bg-[#bdbfc1]">
    <div className="flex w-[53px] items-center bg-gradient-to-b from-[#6c6e70] to-[#3d3e40] pl-1">
      <svg width="6" height="18" viewBox="0 0 6 18"><path d="M.5 0v18M3 0v18M5.500 0v18" stroke="#aaa" strokeDasharray="1 1.500" /></svg>
      <button aria-label="Close command line" className="ml-1">
        <svg width="9" height="9" stroke="#e2e2e2" strokeWidth="2"><path d="M1 1l7 7M8 1L1 8" /></svg>
      </button>
      <button aria-label="Customize command line" className="ml-2.5">
        <Ico><path d="M5 1.200l2 2.300-1.500 2L3 4.500 1 3c-1 4 2 6 5 5l6 7c2 1 4-1 3-3L8 6.500C9 3 8 1 5 1.200z" fill="#d6d6dc" stroke="#222" strokeWidth=".6" /></Ico>
      </button>
    </div>
    <button aria-label="Recent commands" className="flex items-center gap-1 pl-1 text-[#707276]">
      <svg width="15" height="14" viewBox="0 0 15 14" fill="none"><rect x=".5" y=".5" width="14" height="13" rx="1" fill="#a9b3c0" stroke="#68717e" /><path d="M3 4l4 3-4 3M8 10.500h4" stroke="#333b48" strokeWidth="1.300" /></svg>
      <Tri />
    </button>
    <input
      aria-label="Command"
      value={value}
      onChange={onChange}
      placeholder="Type a command"
      className="min-w-0 flex-1 bg-transparent pl-1.5 font-['DejaVu_Sans_Mono'] text-[12px] text-[#222] italic outline-none placeholder:text-[#707276]"
    />
    <button aria-label="History" className="px-[3px] text-[#222]">
      <Tri className="rotate-180" />
    </button>
  </div>
);

const Canvas = () => {
  const [command, setCommand] = useState("");
  return (
    <main className="flex min-h-0 flex-1">
      <div className="relative flex-1 overflow-hidden bg-[#212830]">
        <Drawing />
        <div className="absolute top-1.5 left-[3px] text-[12px] leading-4 text-[#f0f0f0]">[−][Top][Gouraud]</div>
        <div className="absolute top-2.5 right-3 flex items-center gap-2.5">
          <button aria-label="Minimize drawing"><svg width="10" height="10"><path d="M0 8.500h10" stroke="#eee" strokeWidth="3" /></svg></button>
          <button aria-label="Restore drawing"><svg width="10" height="10" fill="none" stroke="#eee"><path d="M1 4h6v5H1z" strokeWidth="2" /><path d="M3 1.500h6.500V8" /></svg></button>
          <button aria-label="Close drawing"><svg width="9" height="9" stroke="#eee" strokeWidth="2.500"><path d="M1 1l7 7M8 1L1 8" /></svg></button>
        </div>
        <ViewCube />
        <NavBar />
        <CommandLine value={command} onChange={(e) => setCommand(e.target.value)} />
      </div>
      <div className="w-[7px] shrink-0 border-r-2 border-[#35d0f5] bg-[#b9cfea]" />
    </main>
  );
};

// ---------- status bar ----------

const Cell = ({ children, width }) => (
  <div className={`mr-0.5 flex h-full items-center justify-between border border-[#7a7a7a] bg-[#4e4e4e] text-[#f0f0f0] ${width}`}>
    {children}
  </div>
);

const StatusButton = ({ name, active, children }) => (
  <button aria-label={name} className={`flex items-center ${active ? "text-[#2f97ff] drop-shadow-[0_0_2px_#0a62d0]" : "text-[#d0d0d0]"}`}>
    <svg width="16" height="16" viewBox="0 0 16 16" fill="none" stroke="currentColor" strokeWidth="1.500">
      {children}
    </svg>
  </button>
);

const LayoutTab = ({ active, children, width }) => (
  <button
    className={`h-[18px] text-[12px] leading-[16px] [clip-path:polygon(0_0,100%_0,95%_25%,90%_85%,86%_100%,14%_100%,10%_85%,5%_25%)] ${width} ${
      active ? "bg-gradient-to-b from-[#4e4e4e] to-[#8c8c8c] font-bold text-white" : "bg-gradient-to-b from-[#484848] to-[#646464] text-[#b8b8b8]"
    }`}
  >
    {children}
  </button>
);

const StatusBar = () => (
  <footer className="flex h-[27px] shrink-0 justify-between border-t border-[#585858] bg-[#383838]">
    <div className="flex pl-2">
      <LayoutTab active width="w-[66px]">Model</LayoutTab>
      <LayoutTab width="w-[64px] -ml-1">Layout1</LayoutTab>
      <LayoutTab width="w-[67px]">Layout2</LayoutTab>
      <button aria-label="New layout" className="ml-0.5 flex h-4 w-[23px] items-center justify-center rounded-tl-lg rounded-br-lg bg-[#4d4d4d]">
        <svg width="9" height="9" stroke="#d0d0d0" strokeWidth="2"><path d="M4.500 0v9M0 4.500h9" /></svg>
      </button>
    </div>
    <div className="flex h-[26px]">
      <Cell width="w-[49px] text-[12px]"><button className="w-full">MODEL</button></Cell>
      <Cell width="w-16 px-1">
        <StatusButton name="Grid" active>
          <path d="M3.500 1v14M6.500 1v14M9.500 1v14M12.500 1v14" strokeDasharray="2 1" />
          <path d="M1 4.500h14M1 8.500h14M1 12.500h14" strokeWidth="1" />
        </StatusButton>
        <StatusButton name="Snap">
          <path d="M1 2.500h14M1 5.500h14M1 8.500h14M1 11.500h14M1 14.500h14" strokeDasharray="1 2" strokeWidth="1" />
        </StatusButton>
        <Tri />
      </Cell>
      <Cell width="w-[166px] px-[3px]">
        <StatusButton name="Ortho" active><path d="M1.500 1v13.500H15M1.500 10h4v4" /></StatusButton>
        <StatusButton name="Polar"><path d="M12 5A6 6 0 1 0 13 8.500" /><path d="M7 8h9M7 8l4-5M7 8V5" /></StatusButton>
        <Tri />
        <StatusButton name="Isodraft"><path d="M0 0l16 16M8 0v6M8 9v7" /></StatusButton>
        <Tri />
        <div className="h-full w-px bg-[#7a7a7a]" />
        <StatusButton name="Object tracking" active><path d="M1 14.500h14M2 13L14 1M6 7l3 3" /></StatusButton>
        <StatusButton name="Object snap" active><path d="M5 2.500h9.500v11h-12V6" /><path d="M0 0h5v5H0z" fill="#0d0" stroke="#041" /></StatusButton>
        <Tri />
      </Cell>
      <Cell width="w-[106px] px-1">
        <StatusButton name="Annotation visibility" active><path d="M7 2l2 7 5 6-7-3-6 3 5-6z" fill="currentColor" /><circle cx="12" cy="4" r="2.500" /></StatusButton>
        <StatusButton name="Auto scale"><path d="M7 2l2 7 6 6-8-3-7 3 5-6z" fill="currentColor" stroke="none" /><path d="M13 1l-2 3h3l-2 4" /></StatusButton>
        <StatusButton name="Annotation scale"><path d="M8 1l2 8 6 5v1l-8-3-8 3v-1l6-5z" fill="currentColor" stroke="none" /></StatusButton>
        <button className="flex items-center gap-1 text-[12px]">1:1<Tri /></button>
      </Cell>
      <Cell width="w-[65px] px-1">
        <StatusButton name="Workspace"><circle cx="8" cy="8" r="3.500" strokeWidth="3" /><path d="M8 2v3M8 11v3M2 8h3M11 8h3M4 4l2 2M10 10l2 2M12 4l-2 2M6 10l-2 2" strokeWidth="2" /></StatusButton>
        <Tri />
        <div className="h-full w-px bg-[#7a7a7a]" />
        <StatusButton name="Annotation monitor"><path d="M8 1v14M1 8h14" /></StatusButton>
      </Cell>
      <Cell width="w-[25px] px-1">
        <StatusButton name="Isolate objects"><path d="M1 1h6v7H1zM4 15l3-5 3 5z" strokeWidth="1.200" /><circle cx="12" cy="6" r="3" strokeWidth="1.200" /></StatusButton>
      </Cell>
      <Cell width="w-[25px] px-1">
        <StatusButton name="Hardware acceleration" active><circle cx="8" cy="8" r="7" fill="#0c4f9c" /><path d="M7 10l5-4" /></StatusButton>
      </Cell>
      <Cell width="w-[23px] px-[3px]">
        <StatusButton name="Drawing status">
          <path d="M4 1h7l3 4v8H4z" fill="#9fc2ec" stroke="none" />
          <path d="M1 9h12v5H1z" fill="#ffd93b" stroke="none" />
          <path d="M1 3h6M3 1v6" stroke="#fff" />
          <path d="M6 12l3 3 6-7" stroke="#2fb52f" strokeWidth="2.500" />
        </StatusButton>
      </Cell>
      <div className="flex h-full w-[50px] items-center justify-between border border-[#7a7a7a] bg-[#4e4e4e] px-1">
        <StatusButton name="Clean screen"><path d="M1 2h14v12H1zM9 5h3v3M12 5L9 8M4 8v3h3M4 11l3-3" strokeWidth="1.200" /></StatusButton>
        <StatusButton name="Customization"><path d="M1 3h14M1 8h14M1 13h14" strokeWidth="2" /></StatusButton>
      </div>
    </div>
  </footer>
);

const App = () => {
  const [activeTab, setActiveTab] = useState("Home");

  return (
    <div className="relative flex h-screen flex-col overflow-hidden bg-[#4f4f4f] font-['Open_Sans',sans-serif]">
      <Defs />
      <TitleBar />
      <div className="flex h-5 shrink-0 items-end gap-px border-t border-[#333] bg-[#525252] pl-12">
        {tabs.map((tab) => (
          <button
            key={tab}
            onClick={() => setActiveTab(tab)}
            className={`h-[18px] px-2 text-[12px] leading-[17px] whitespace-nowrap ${
              tab === activeTab
                ? "bg-gradient-to-b from-[#7b7b7b] to-[#5c5c5c] text-white outline outline-[#333]"
                : "text-[#cfcfcf]"
            }`}
          >
            {tab}
          </button>
        ))}
        <button aria-label="Minimize ribbon" className="ml-[18px] flex h-[18px] items-center gap-1.5 text-[#f0f0f0]">
          <svg width="15" height="9" viewBox="0 0 15 9"><rect width="15" height="9" rx="2" fill="#e6e6e6" /><path d="M4 6h7L7.500 3z" fill="#333" /></svg>
          <Tri />
        </button>
      </div>
      <button aria-label="Application menu" className="absolute top-0 left-0 flex h-[41px] w-[41px] items-center border border-black bg-gradient-to-b from-[#a8a8a8] to-[#5e5e5e] pl-1 text-[#222]">
        <svg width="24" height="25" viewBox="0 0 24 25">
          <path d="M12 0L22 19c1 2 1 4-1 5h-3c-1-4-3-6-6-6s-5 2-6 6H3c-2-1-3-3-2-5z" fill="#c41a22" />
          <path d="M12 0L1 19c3-2 7-4 11-6z" fill="#e02a32" />
          <path d="M3 17c5-3 11-4 18 2l-4-9c-4 4-9 6-14 7z" fill="#9c1219" />
        </svg>
        <Tri className="ml-0.5" />
      </button>
      <Ribbon />
      <div className="h-1 shrink-0 border-t-2 border-[#333] bg-[#777]" />
      <Canvas />
      <StatusBar />
    </div>
  );
};

export default App;
